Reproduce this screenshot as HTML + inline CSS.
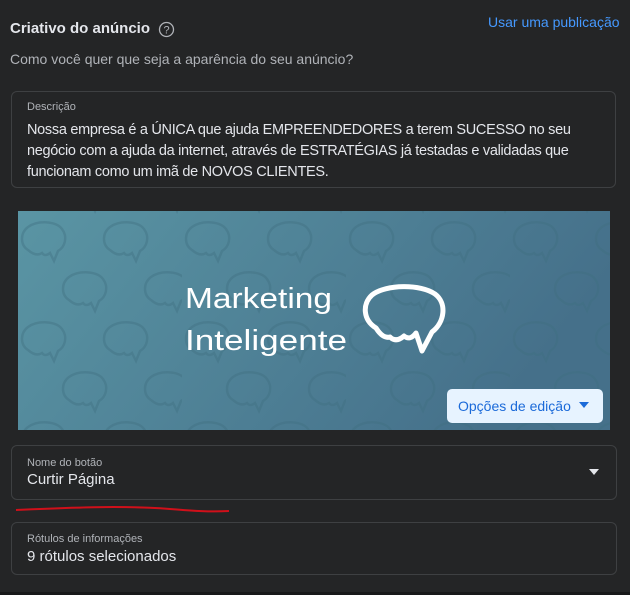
<!DOCTYPE html>
<html><head><meta charset="utf-8"><style>
*{margin:0;padding:0;box-sizing:border-box}
body{width:630px;height:595px;background:#242526;font-family:"Liberation Sans",sans-serif;color:#e4e6eb;position:relative;overflow:hidden}
.a{position:absolute}
.box{position:absolute;border:1px solid #3e4042;border-radius:6px}
.lbl{font-size:11px;color:#b0b3b8}
.val{font-size:15px;color:#e4e6eb}
</style></head><body>
<div class="a" style="left:10px;top:20px;font-size:15px;font-weight:bold;color:#e4e6eb">Criativo do anúncio</div>
<svg class="a" style="left:158px;top:21px" width="17" height="17" viewBox="0 0 17 17"><circle cx="8.5" cy="8.5" r="7" fill="none" stroke="#b0b3b8" stroke-width="1.3"/><text x="8.5" y="12.5" font-size="11" text-anchor="middle" fill="#b0b3b8" font-family="Liberation Sans">?</text></svg>
<div class="a" style="left:488px;top:14px;font-size:14px;color:#4599ff">Usar uma publicação</div>
<div class="a" style="left:10px;top:51px;font-size:14px;color:#b0b3b8">Como você quer que seja a aparência do seu anúncio?</div>
<div class="box" style="left:11px;top:91px;width:605px;height:97px"></div>
<div class="a lbl" style="left:27px;top:101px">Descrição</div>
<div class="a val" style="left:27px;top:120px;line-height:21px;white-space:nowrap;font-size:14.5px;letter-spacing:-0.3px">Nossa empresa é a ÚNICA que ajuda EMPREENDEDORES a terem SUCESSO no seu<br>negócio com a ajuda da internet, através de ESTRATÉGIAS já testadas e validadas que<br>funcionam como um imã de NOVOS CLIENTES.</div>
<svg class="a" style="left:18px;top:211px" width="592" height="219" viewBox="18 211 592 219">
<defs>
<linearGradient id="g" x1="0" y1="0" x2="1" y2="0.3"><stop offset="0" stop-color="#5a95a4"/><stop offset="1" stop-color="#45708a"/></linearGradient>
<pattern id="p" x="18" y="215" width="164" height="100" patternUnits="userSpaceOnUse">
<g fill="none" stroke="#3f6f80" stroke-opacity="0.4" stroke-width="2.5">
<path d="M10,35 C2,30 2,18 10,12 C20,5 38,6 44,14 C50,22 47,32 40,36 L36,46 L32,38 Q27,42 24,38 Q18,42 10,35Z"/>
<path d="M92,35 C84,30 84,18 92,12 C102,5 120,6 126,14 C132,22 129,32 122,36 L118,46 L114,38 Q109,42 106,38 Q100,42 92,35Z"/>
<path d="M51,85 C43,80 43,68 51,62 C61,55 79,56 85,64 C91,72 88,82 81,86 L77,96 L73,88 Q68,92 65,88 Q59,92 51,85Z"/>
<path d="M133,85 C125,80 125,68 133,62 C143,55 161,56 167,64 C173,72 170,82 163,86 L159,96 L155,88 Q150,92 147,88 Q141,92 133,85Z"/>
</g></pattern></defs>
<rect x="18" y="211" width="592" height="219" fill="url(#g)"/>
<rect x="18" y="211" width="592" height="219" fill="url(#p)"/>
<text x="185" y="308" font-family="Liberation Sans Narrow,Liberation Sans,sans-serif" font-size="29" fill="#fff" textLength="147" lengthAdjust="spacingAndGlyphs" style="font-weight:100">Marketing</text>
<text x="185" y="350" font-family="Liberation Sans Narrow,Liberation Sans,sans-serif" font-size="29" fill="#fff" textLength="162" lengthAdjust="spacingAndGlyphs">Inteligente</text>
<path d="M376,328 C363,320 362,304 372,295 C386,284 421,284 435,294 C447,303 445,322 432,332 L422,351 L416,333 Q410,341 404,336 Q396,343 390,337 Q383,339 376,328 Z" fill="none" stroke="#fff" stroke-width="5" stroke-linejoin="round"/>
<rect x="447" y="389" width="156" height="34" rx="5" fill="#e7f3ff"/>
<text x="458" y="411" font-family="Liberation Sans" font-size="14" fill="#1b6ad9">Opções de edição</text>
<path d="M579,402 L589,402 L584,408Z" fill="#1b6ad9"/>
</svg>
<div class="box" style="left:11px;top:445px;width:606px;height:55px"></div>
<div class="a lbl" style="left:27px;top:457px">Nome do botão</div>
<div class="a val" style="left:27px;top:471px">Curtir Página</div>
<svg class="a" style="left:588px;top:468px" width="12" height="8"><path d="M1,1 L11,1 L6,7Z" fill="#e4e6eb"/></svg>
<svg class="a" style="left:0;top:505px" width="240" height="12"><path d="M16,5 C60,3 120,0 170,4 C195,6 210,7 229,6" fill="none" stroke="#d0101a" stroke-width="2"/></svg>
<div class="box" style="left:11px;top:522px;width:606px;height:53px"></div>
<div class="a lbl" style="left:27px;top:533px">Rótulos de informações</div>
<div class="a val" style="left:27px;top:548px">9 rótulos selecionados</div>
<div class="a" style="left:0;top:592px;width:630px;height:3px;background:#18191a"></div>
</body></html>
